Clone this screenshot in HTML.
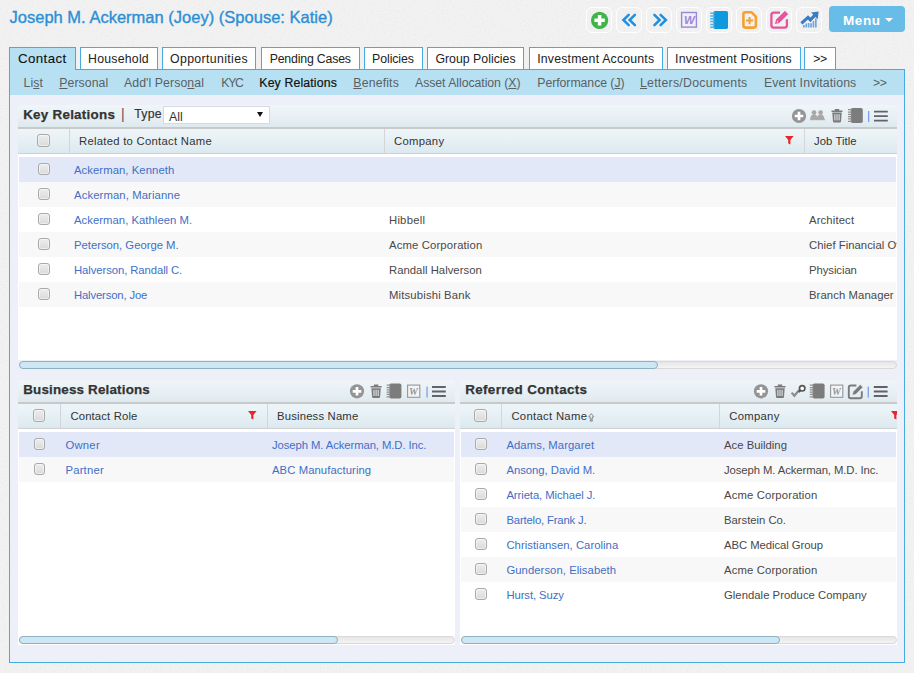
<!DOCTYPE html>
<html><head><meta charset="utf-8"><title>Joseph M. Ackerman</title>
<style>
html,body{margin:0;padding:0}
body{width:914px;height:673px;overflow:hidden;background:#f0f0f0;position:relative;font-family:"Liberation Sans",sans-serif}
.a{position:absolute}
.t{position:absolute;white-space:nowrap;font-family:"Liberation Sans",sans-serif}
u{text-decoration:underline}
</style></head><body>
<svg class="a" style="left:0;top:0" width="914" height="673"><filter id="nz" x="0" y="0" width="100%" height="100%"><feTurbulence type="fractalNoise" baseFrequency="0.7" numOctaves="2" seed="3"/><feColorMatrix type="matrix" values="0 0 0 0 0.5  0 0 0 0 0.5  0 0 0 0 0.5  0.5 0.5 0 0 -0.38"/></filter><rect width="914" height="673" fill="#f3f3f3"/><rect width="914" height="673" filter="url(#nz)" opacity=".35"/></svg>
<div class="t" style="left:9.50px;top:6.08px;font-size:16.5px;line-height:23px;letter-spacing:0.009px;color:#2b8fd6;-webkit-text-stroke:0.35px #2b8fd6;">Joseph M. Ackerman (Joey) (Spouse: Katie)</div>
<div class="a" style="left:586.2px;top:7px;width:25.6px;height:25.8px;border:1px solid rgba(255,255,255,.9);border-radius:6px;box-sizing:border-box;"></div>
<div class="a" style="left:616.2px;top:7px;width:25.6px;height:25.8px;border:1px solid rgba(255,255,255,.9);border-radius:6px;box-sizing:border-box;"></div>
<div class="a" style="left:646.2px;top:7px;width:25.6px;height:25.8px;border:1px solid rgba(255,255,255,.9);border-radius:6px;box-sizing:border-box;"></div>
<div class="a" style="left:676.2px;top:7px;width:25.6px;height:25.8px;border:1px solid rgba(255,255,255,.9);border-radius:6px;box-sizing:border-box;"></div>
<div class="a" style="left:706.2px;top:7px;width:25.6px;height:25.8px;border:1px solid rgba(255,255,255,.9);border-radius:6px;box-sizing:border-box;"></div>
<div class="a" style="left:736.2px;top:7px;width:25.6px;height:25.8px;border:1px solid rgba(255,255,255,.9);border-radius:6px;box-sizing:border-box;"></div>
<div class="a" style="left:766.2px;top:7px;width:25.6px;height:25.8px;border:1px solid rgba(255,255,255,.9);border-radius:6px;box-sizing:border-box;"></div>
<div class="a" style="left:796.2px;top:7px;width:25.6px;height:25.8px;border:1px solid rgba(255,255,255,.9);border-radius:6px;box-sizing:border-box;"></div>
<svg class="a" style="left:580px;top:0" width="250" height="40" viewBox="580 0 250 40">
<!-- plus -->
<circle cx="599.6" cy="20.3" r="8.6" fill="#40b449"/>
<path d="M599.6 15.1v10.4M594.4 20.3h10.4" stroke="#fff" stroke-width="3.5" stroke-linecap="butt"/>
<!-- << -->
<path d="M628.7 14.8l-5.3 5.2 5.3 5.2M634.9 14.8l-5.3 5.2 5.3 5.2" fill="none" stroke="#1e8fe1" stroke-width="2.5" stroke-linejoin="miter" stroke-linecap="round"/>
<!-- >> -->
<path d="M654.4 14.8l5.3 5.2-5.3 5.2M660.6 14.8l5.3 5.2-5.3 5.2" fill="none" stroke="#1e8fe1" stroke-width="2.5" stroke-linecap="round"/>
<!-- W -->
<rect x="681.6" y="12.5" width="14.8" height="14.6" fill="#f1eff9" stroke="#9888d8" stroke-width="1.4"/>
<text x="689.3" y="23.9" font-family="Liberation Sans, sans-serif" font-size="11.4" font-style="italic" font-weight="bold" fill="#9888d8" text-anchor="middle">W</text>
<!-- notebook -->
<rect x="713.4" y="10.9" width="14.6" height="18" rx="1.6" fill="#0e98de"/>
<path d="M710.2 13.2h4.6M710.2 16h4.6M710.2 18.8h4.6M710.2 21.6h4.6M710.2 24.4h4.6M710.2 27.2h4.6" stroke="#49b1e8" stroke-width="1.5"/>
<!-- doc plus -->
<path d="M745.4 12.2h6l4.5 4.5v8.9a2 2 0 0 1-2 2h-8.5a2 2 0 0 1-2-2v-11.4a2 2 0 0 1 2-2z" fill="none" stroke="#f5a030" stroke-width="2.6" stroke-linejoin="round"/>
<path d="M749.6 17v7.2M746 20.6h7.2" stroke="#f5a030" stroke-width="2"/>
<!-- edit -->
<path d="M780 12.6h-6.2a2.4 2.4 0 0 0-2.4 2.4v10.2a2.4 2.4 0 0 0 2.4 2.4h10.7a2.4 2.4 0 0 0 2.4-2.4v-6" fill="none" stroke="#e6529c" stroke-width="2.3"/>
<path d="M774.2 24.8l1.3-5.4 9.4-9.4 4.1 4.1-9.4 9.4z" fill="#e6529c" stroke="#f2f2f2" stroke-width="1.1" stroke-linejoin="round"/><path d="M776.6 22.4l.5-1.9 1.4 1.4z" fill="#fbe3ef"/>
<!-- chart -->
<path d="M803 27.6v-2.6h1.7v2.6zM805.4 27.6v-4.2h1.7v4.2zM807.8 27.6v-4.6h1.7v4.6zM810.2 27.6v-4.4h1.7v4.4zM812.6 27.6v-6.6h1.7v6.6zM815 27.6v-9.2h1.7v9.2z" fill="#6fa6dc"/>
<path d="M801.4 23.4l6.6-6 2.4 2.5 4.8-5" fill="none" stroke="#3a7dc6" stroke-width="3.2"/>
<path d="M811 12.6l7.6-1-.8 7.6z" fill="#3a7dc6"/>
</svg>
<div class="a" style="left:829px;top:6px;width:76px;height:26px;background:#67bce8;border-radius:4px;"></div>
<div class="t" style="left:843.00px;top:10.72px;font-size:13.5px;line-height:19px;letter-spacing:0.587px;color:#fff;font-weight:bold;">Menu</div>
<div class="a" style="left:885px;top:18px;width:0;height:0;border-left:4px solid transparent;border-right:4px solid transparent;border-top:4px solid #fff"></div>
<div class="a" style="left:9px;top:69px;width:896px;height:594px;box-sizing:border-box;border:1px solid #45abe1;background:#eef0f9;"></div>
<div class="a" style="left:10px;top:70px;width:894px;height:25px;background:#b7e1f3;"></div>
<div class="a" style="left:9px;top:47px;width:67px;height:23px;box-sizing:border-box;border:1px solid #45abe1;border-bottom:0;background:#b7e1f3;"></div>
<div class="t" style="left:18.00px;top:49.39px;font-size:13.3px;line-height:19px;letter-spacing:0.400px;color:#111;-webkit-text-stroke:0.12px #111;">Contact</div>
<div class="a" style="left:79.5px;top:47px;width:78px;height:23px;box-sizing:border-box;border:1px solid #45abe1;background:#fff;"></div>
<div class="t" style="left:88.04px;top:50.74px;font-size:12.3px;line-height:17px;letter-spacing:0.236px;color:#222;">Household</div>
<div class="a" style="left:162px;top:47px;width:94px;height:23px;box-sizing:border-box;border:1px solid #45abe1;background:#fff;"></div>
<div class="t" style="left:170.03px;top:50.74px;font-size:12.3px;line-height:17px;letter-spacing:0.368px;color:#222;">Opportunities</div>
<div class="a" style="left:261px;top:47px;width:98.5px;height:23px;box-sizing:border-box;border:1px solid #45abe1;background:#fff;"></div>
<div class="t" style="left:269.65px;top:50.74px;font-size:12.3px;line-height:17px;letter-spacing:-0.171px;color:#222;">Pending Cases</div>
<div class="a" style="left:363.5px;top:47px;width:59px;height:23px;box-sizing:border-box;border:1px solid #45abe1;background:#fff;"></div>
<div class="t" style="left:372.12px;top:50.74px;font-size:12.3px;line-height:17px;letter-spacing:-0.079px;color:#222;">Policies</div>
<div class="a" style="left:427px;top:47px;width:97px;height:23px;box-sizing:border-box;border:1px solid #45abe1;background:#fff;"></div>
<div class="t" style="left:435.38px;top:50.74px;font-size:12.3px;line-height:17px;letter-spacing:0.018px;color:#222;">Group Policies</div>
<div class="a" style="left:528.5px;top:47px;width:134.5px;height:23px;box-sizing:border-box;border:1px solid #45abe1;background:#fff;"></div>
<div class="t" style="left:537.26px;top:50.74px;font-size:12.3px;line-height:17px;letter-spacing:0.184px;color:#222;">Investment Accounts</div>
<div class="a" style="left:666.5px;top:47px;width:134px;height:23px;box-sizing:border-box;border:1px solid #45abe1;background:#fff;"></div>
<div class="t" style="left:675.06px;top:50.74px;font-size:12.3px;line-height:17px;letter-spacing:0.169px;color:#222;">Investment Positions</div>
<div class="a" style="left:804px;top:47px;width:32px;height:23px;box-sizing:border-box;border:1px solid #45abe1;background:#fff;"></div>
<div class="t" style="left:813.14px;top:50.74px;font-size:12.3px;line-height:17px;letter-spacing:-0.323px;color:#222;">&gt;&gt;</div>
<div class="t" style="left:23.60px;top:75.14px;font-size:12.3px;line-height:17px;letter-spacing:0.021px;color:#5a5f63;">Li<u>s</u>t</div>
<div class="t" style="left:59.30px;top:75.14px;font-size:12.3px;line-height:17px;letter-spacing:0.045px;color:#5a5f63;"><u>P</u>ersonal</div>
<div class="t" style="left:124.00px;top:75.14px;font-size:12.3px;line-height:17px;letter-spacing:0.078px;color:#5a5f63;">Add'l Perso<u>n</u>al</div>
<div class="t" style="left:221.30px;top:75.14px;font-size:12.3px;line-height:17px;letter-spacing:-1.292px;color:#5a5f63;">KYC</div>
<div class="t" style="left:259.30px;top:75.14px;font-size:12.3px;line-height:17px;letter-spacing:0.135px;color:#111;-webkit-text-stroke:0.2px #111;">Key Relations</div>
<div class="t" style="left:353.30px;top:75.14px;font-size:12.3px;line-height:17px;letter-spacing:0.153px;color:#5a5f63;"><u>B</u>enefits</div>
<div class="t" style="left:415.00px;top:75.14px;font-size:12.3px;line-height:17px;letter-spacing:-0.059px;color:#5a5f63;">Asset Allocation (<u>X</u>)</div>
<div class="t" style="left:537.30px;top:75.14px;font-size:12.3px;line-height:17px;letter-spacing:-0.063px;color:#5a5f63;">Performance (<u>J</u>)</div>
<div class="t" style="left:640.00px;top:75.14px;font-size:12.3px;line-height:17px;letter-spacing:0.251px;color:#5a5f63;"><u>L</u>etters/Documents</div>
<div class="t" style="left:764.00px;top:75.14px;font-size:12.3px;line-height:17px;letter-spacing:0.127px;color:#5a5f63;">Event Invitations</div>
<div class="t" style="left:873.00px;top:75.14px;font-size:12.3px;line-height:17px;letter-spacing:-0.323px;color:#5a5f63;">&gt;&gt;</div>
<div class="a" style="left:18px;top:104px;width:879px;height:270px;overflow:hidden">
<div class="a" style="left:-18px;top:-104px;width:914px;height:673px">
<div class="a" style="left:18px;top:105px;width:878.5px;height:23px;background:linear-gradient(#eff5f9,#e8f0f4 50%,#dde9ee);border-radius:3px 3px 0 0;"></div>
<div class="t" style="left:23.20px;top:105.26px;font-size:13.4px;line-height:19px;letter-spacing:0.259px;color:#333;font-weight:bold;-webkit-text-stroke:0.25px #333;">Key Relations</div>
<div class="a" style="left:18px;top:127px;width:878.5px;height:1.5px;background:#c8c9ca;"></div>
<div class="a" style="left:18px;top:128.5px;width:878.5px;height:24.5px;background:linear-gradient(#eef5f8,#e6f0f4 50%,#dbe9ef);"></div>
<div class="a" style="left:18px;top:153px;width:878.5px;height:1.1px;background:#cfd1d2;"></div>
<div class="a" style="left:18px;top:154.1px;width:878.5px;height:206.4px;background:#fff;"></div>
<div class="a" style="left:37.35px;top:134px;width:12.6px;height:12.6px;box-sizing:border-box;border:1px solid #a9a9a9;border-radius:3px;background:linear-gradient(#ededed,#dadada);box-shadow:inset 0 0 0 1px rgba(255,255,255,.5);"></div>
<div class="a" style="left:68.8px;top:128.5px;width:1px;height:24.5px;background:#d2d6d8;"></div>
<div class="t" style="left:79.00px;top:132.68px;font-size:11.3px;line-height:16px;letter-spacing:0.265px;color:#333;">Related to Contact Name</div>
<div class="a" style="left:384px;top:128.5px;width:1px;height:24.5px;background:#d2d6d8;"></div>
<div class="t" style="left:394.00px;top:132.68px;font-size:11.3px;line-height:16px;letter-spacing:0.281px;color:#333;">Company</div>
<div class="a" style="left:804px;top:128.5px;width:1px;height:24.5px;background:#d2d6d8;"></div>
<svg class="a" style="left:785px;top:136px" width="9" height="9" viewBox="0 0 9 9"><path d="M0 0h8.6l-3.2 4v4.6l-2.2-1.2v-3.4z" fill="#e8262c"/></svg>
<div class="t" style="left:814.00px;top:132.68px;font-size:11.3px;line-height:16px;letter-spacing:0.073px;color:#333;">Job Title</div>
<div class="a" style="left:19px;top:156.8px;width:876.5px;height:25px;background:#e3e8f9;"></div>
<div class="a" style="left:38.35px;top:163.2px;width:11.6px;height:11.6px;box-sizing:border-box;border:1px solid #a9a9a9;border-radius:3px;background:linear-gradient(#ededed,#dadada);box-shadow:inset 0 0 0 1px rgba(255,255,255,.5);"></div>
<div class="t" style="left:74.00px;top:162.28px;font-size:11.3px;line-height:16px;letter-spacing:0.062px;color:#3f6fc6;white-space:nowrap;">Ackerman, Kenneth</div>
<div class="a" style="left:19px;top:181.8px;width:876.5px;height:25px;background:#f8f8f8;"></div>
<div class="a" style="left:38.35px;top:188.2px;width:11.6px;height:11.6px;box-sizing:border-box;border:1px solid #a9a9a9;border-radius:3px;background:linear-gradient(#ededed,#dadada);box-shadow:inset 0 0 0 1px rgba(255,255,255,.5);"></div>
<div class="t" style="left:74.00px;top:187.28px;font-size:11.3px;line-height:16px;letter-spacing:0.107px;color:#3f6fc6;white-space:nowrap;">Ackerman, Marianne</div>
<div class="a" style="left:19px;top:206.8px;width:876.5px;height:25px;background:#fff;"></div>
<div class="a" style="left:38.35px;top:213.2px;width:11.6px;height:11.6px;box-sizing:border-box;border:1px solid #a9a9a9;border-radius:3px;background:linear-gradient(#ededed,#dadada);box-shadow:inset 0 0 0 1px rgba(255,255,255,.5);"></div>
<div class="t" style="left:74.00px;top:212.28px;font-size:11.3px;line-height:16px;letter-spacing:0.035px;color:#3f6fc6;white-space:nowrap;">Ackerman, Kathleen M.</div>
<div class="t" style="left:389.00px;top:212.28px;font-size:11.3px;line-height:16px;letter-spacing:0.225px;color:#484848;white-space:nowrap;">Hibbell</div>
<div class="t" style="left:809.00px;top:212.28px;font-size:11.3px;line-height:16px;letter-spacing:0.136px;color:#484848;white-space:nowrap;">Architect</div>
<div class="a" style="left:19px;top:231.8px;width:876.5px;height:25px;background:#f8f8f8;"></div>
<div class="a" style="left:38.35px;top:238.2px;width:11.6px;height:11.6px;box-sizing:border-box;border:1px solid #a9a9a9;border-radius:3px;background:linear-gradient(#ededed,#dadada);box-shadow:inset 0 0 0 1px rgba(255,255,255,.5);"></div>
<div class="t" style="left:74.00px;top:237.28px;font-size:11.3px;line-height:16px;letter-spacing:-0.012px;color:#3f6fc6;white-space:nowrap;">Peterson, George M.</div>
<div class="t" style="left:389.00px;top:237.28px;font-size:11.3px;line-height:16px;letter-spacing:0.144px;color:#484848;white-space:nowrap;">Acme Corporation</div>
<div class="t" style="left:809.00px;top:237.28px;font-size:11.3px;line-height:16px;letter-spacing:0.038px;color:#484848;white-space:nowrap;">Chief Financial Officer</div>
<div class="a" style="left:19px;top:256.8px;width:876.5px;height:25px;background:#fff;"></div>
<div class="a" style="left:38.35px;top:263.2px;width:11.6px;height:11.6px;box-sizing:border-box;border:1px solid #a9a9a9;border-radius:3px;background:linear-gradient(#ededed,#dadada);box-shadow:inset 0 0 0 1px rgba(255,255,255,.5);"></div>
<div class="t" style="left:74.00px;top:262.28px;font-size:11.3px;line-height:16px;letter-spacing:-0.081px;color:#3f6fc6;white-space:nowrap;">Halverson, Randall C.</div>
<div class="t" style="left:389.00px;top:262.28px;font-size:11.3px;line-height:16px;letter-spacing:0.027px;color:#484848;white-space:nowrap;">Randall Halverson</div>
<div class="t" style="left:809.00px;top:262.28px;font-size:11.3px;line-height:16px;letter-spacing:-0.058px;color:#484848;white-space:nowrap;">Physician</div>
<div class="a" style="left:19px;top:281.8px;width:876.5px;height:25px;background:#f8f8f8;"></div>
<div class="a" style="left:38.35px;top:288.2px;width:11.6px;height:11.6px;box-sizing:border-box;border:1px solid #a9a9a9;border-radius:3px;background:linear-gradient(#ededed,#dadada);box-shadow:inset 0 0 0 1px rgba(255,255,255,.5);"></div>
<div class="t" style="left:74.00px;top:287.28px;font-size:11.3px;line-height:16px;letter-spacing:-0.159px;color:#3f6fc6;white-space:nowrap;">Halverson, Joe</div>
<div class="t" style="left:389.00px;top:287.28px;font-size:11.3px;line-height:16px;letter-spacing:0.160px;color:#484848;white-space:nowrap;">Mitsubishi Bank</div>
<div class="t" style="left:809.00px;top:287.28px;font-size:11.3px;line-height:16px;letter-spacing:0.085px;color:#484848;white-space:nowrap;">Branch Manager</div>
<div class="a" style="left:19px;top:361px;width:877.5px;height:8px;box-sizing:border-box;border:1px solid #d9d9d9;border-radius:4px;background:linear-gradient(#e6e6e6,#f4f4f4);"></div>
<div class="a" style="left:19px;top:361px;width:638.5px;height:8px;box-sizing:border-box;border:1px solid #8fb0c0;border-radius:4px;background:#cde7f5;"></div>
<svg class="a" style="left:18px;top:105px" width="878.5" height="24" viewBox="18 105 878.5 24"><circle cx="799" cy="116" r="7.1" fill="#949494"/><path d="M799 111.7v8.6M794.7 116h8.6" stroke="#fff" stroke-width="2.7"/><circle cx="814" cy="112.6" r="2.4" fill="#a8a8a8"/><path d="M810.2 119.6c0-3.4 1.4-5 3.8-5s3.8 1.6 3.8 5z" fill="#a8a8a8"/><circle cx="820.6" cy="112.6" r="2.4" fill="#a8a8a8"/><path d="M816.8 119.6c0-3.4 1.4-5 3.8-5s3.8 1.6 3.8 5z" fill="#a8a8a8"/><rect x="810" y="119.1" width="15" height="1.1" fill="#a8a8a8"/><path d="M831.5 110.4h11v1.5h-11zM834.8 109h4.4v1.4h-4.4z" fill="#7a7a7a"/><path d="M832.3 112.6h9.4l-.7 8.9a1.1 1.1 0 0 1-1.1 1h-5.8a1.1 1.1 0 0 1-1.1-1z" fill="#7a7a7a"/><path d="M834.9 114.2v6.2M837 114.2v6.2M839.1 114.2v6.2" stroke="#e9eff3" stroke-width="1"/><rect x="850.8" y="108" width="12" height="15" rx="1.8" fill="#7c7c7c"/><path d="M848 109.7h4M848 112.02h4M848 114.34h4M848 116.66h4M848 118.98h4M848 121.3h4" stroke="#8e8e8e" stroke-width="1.25"/><rect x="868" y="111" width="1.3" height="11" fill="#7f9ee9"/><path d="M874 111.6h13.8M874 116.1h13.8M874 120.6h13.8" stroke="#62626a" stroke-width="1.8"/></svg>
</div></div>
<div class="t" style="left:121.00px;top:104.15px;font-size:14px;line-height:20px;letter-spacing:4.073px;color:#555;">|</div>
<div class="t" style="left:134.30px;top:105.84px;font-size:12.3px;line-height:17px;letter-spacing:0.178px;color:#333;-webkit-text-stroke:0.15px #333;">Type</div>
<div class="a" style="left:163px;top:106px;width:106.5px;height:17.5px;box-sizing:border-box;border:1px solid #d6dade;background:#fff;"></div>
<div class="t" style="left:169.00px;top:108.54px;font-size:12.3px;line-height:17px;letter-spacing:0.000px;color:#333;">All</div>
<div class="a" style="left:257px;top:112px;width:0;height:0;border-left:3.2px solid transparent;border-right:3.2px solid transparent;border-top:5.6px solid #111"></div>
<div class="a" style="left:18px;top:379px;width:437px;height:270px;overflow:hidden">
<div class="a" style="left:-18px;top:-379px;width:914px;height:673px">
<div class="a" style="left:18px;top:380px;width:437px;height:23px;background:linear-gradient(#eff5f9,#e8f0f4 50%,#dde9ee);border-radius:3px 3px 0 0;"></div>
<div class="t" style="left:23.20px;top:380.06px;font-size:13.4px;line-height:19px;letter-spacing:0.181px;color:#333;font-weight:bold;-webkit-text-stroke:0.25px #333;">Business Relations</div>
<div class="a" style="left:18px;top:402px;width:437px;height:1.5px;background:#c8c9ca;"></div>
<div class="a" style="left:18px;top:403.5px;width:437px;height:24.5px;background:linear-gradient(#eef5f8,#e6f0f4 50%,#dbe9ef);"></div>
<div class="a" style="left:18px;top:428px;width:437px;height:1.1px;background:#cfd1d2;"></div>
<div class="a" style="left:18px;top:429.1px;width:437px;height:215.9px;background:#fff;"></div>
<div class="a" style="left:32.85px;top:409px;width:12.6px;height:12.6px;box-sizing:border-box;border:1px solid #a9a9a9;border-radius:3px;background:linear-gradient(#ededed,#dadada);box-shadow:inset 0 0 0 1px rgba(255,255,255,.5);"></div>
<div class="a" style="left:59.8px;top:403.5px;width:1px;height:24.5px;background:#d2d6d8;"></div>
<div class="t" style="left:70.40px;top:407.68px;font-size:11.3px;line-height:16px;letter-spacing:0.154px;color:#333;">Contact Role</div>
<div class="a" style="left:267px;top:403.5px;width:1px;height:24.5px;background:#d2d6d8;"></div>
<svg class="a" style="left:248px;top:411px" width="9" height="9" viewBox="0 0 9 9"><path d="M0 0h8.6l-3.2 4v4.6l-2.2-1.2v-3.4z" fill="#e8262c"/></svg>
<div class="t" style="left:277.00px;top:407.68px;font-size:11.3px;line-height:16px;letter-spacing:0.176px;color:#333;">Business Name</div>
<div class="a" style="left:19px;top:431.8px;width:435px;height:25px;background:#e3e8f9;"></div>
<div class="a" style="left:33.85px;top:438.2px;width:11.6px;height:11.6px;box-sizing:border-box;border:1px solid #a9a9a9;border-radius:3px;background:linear-gradient(#ededed,#dadada);box-shadow:inset 0 0 0 1px rgba(255,255,255,.5);"></div>
<div class="t" style="left:65.40px;top:437.28px;font-size:11.3px;line-height:16px;letter-spacing:0.251px;color:#3f6fc6;white-space:nowrap;">Owner</div>
<div class="t" style="left:272.00px;top:437.28px;font-size:11.3px;line-height:16px;letter-spacing:-0.091px;color:#3f6fc6;white-space:nowrap;">Joseph M. Ackerman, M.D. Inc.</div>
<div class="a" style="left:19px;top:456.8px;width:435px;height:25px;background:#f8f8f8;"></div>
<div class="a" style="left:33.85px;top:463.2px;width:11.6px;height:11.6px;box-sizing:border-box;border:1px solid #a9a9a9;border-radius:3px;background:linear-gradient(#ededed,#dadada);box-shadow:inset 0 0 0 1px rgba(255,255,255,.5);"></div>
<div class="t" style="left:65.40px;top:462.28px;font-size:11.3px;line-height:16px;letter-spacing:0.211px;color:#3f6fc6;white-space:nowrap;">Partner</div>
<div class="t" style="left:272.00px;top:462.28px;font-size:11.3px;line-height:16px;letter-spacing:0.072px;color:#3f6fc6;white-space:nowrap;">ABC Manufacturing</div>
<div class="a" style="left:19px;top:636px;width:436px;height:8px;box-sizing:border-box;border:1px solid #d9d9d9;border-radius:4px;background:linear-gradient(#e6e6e6,#f4f4f4);"></div>
<div class="a" style="left:19px;top:636px;width:319px;height:8px;box-sizing:border-box;border:1px solid #8fb0c0;border-radius:4px;background:#cde7f5;"></div>
<svg class="a" style="left:18px;top:380px" width="437" height="24" viewBox="18 380 437 24"><circle cx="357" cy="391.3" r="7.1" fill="#949494"/><path d="M357 387v8.6M352.7 391.3h8.6" stroke="#fff" stroke-width="2.7"/><path d="M370.6 386h11v1.5h-11zM373.9 384.6h4.4v1.4h-4.4z" fill="#7a7a7a"/><path d="M371.4 388.2h9.4l-.7 8.9a1.1 1.1 0 0 1-1.1 1h-5.8a1.1 1.1 0 0 1-1.1-1z" fill="#7a7a7a"/><path d="M374 389.8v6.2M376.1 389.8v6.2M378.2 389.8v6.2" stroke="#e9eff3" stroke-width="1"/><rect x="389.4" y="383.5" width="12" height="15" rx="1.8" fill="#7c7c7c"/><path d="M386.6 385.2h4M386.6 387.52h4M386.6 389.84h4M386.6 392.16h4M386.6 394.48h4M386.6 396.8h4" stroke="#8e8e8e" stroke-width="1.25"/><rect x="407.6" y="385.1" width="12.2" height="12.2" fill="#f1f5f8" stroke="#969696" stroke-width="1.1"/><text x="413.5" y="394.8" font-family="Liberation Serif, serif" font-size="10" font-style="italic" font-weight="bold" fill="#969696" text-anchor="middle">W</text><rect x="426.4" y="386.6" width="1.3" height="11" fill="#7f9ee9"/><path d="M432 387h13.8M432 391.5h13.8M432 396h13.8" stroke="#62626a" stroke-width="1.8"/></svg>
</div></div>
<div class="a" style="left:460px;top:379px;width:437px;height:270px;overflow:hidden">
<div class="a" style="left:-460px;top:-379px;width:914px;height:673px">
<div class="a" style="left:460px;top:380px;width:436.5px;height:23px;background:linear-gradient(#eff5f9,#e8f0f4 50%,#dde9ee);border-radius:3px 3px 0 0;"></div>
<div class="t" style="left:465.20px;top:380.06px;font-size:13.4px;line-height:19px;letter-spacing:0.362px;color:#333;font-weight:bold;-webkit-text-stroke:0.25px #333;">Referred Contacts</div>
<div class="a" style="left:460px;top:402px;width:436.5px;height:1.5px;background:#c8c9ca;"></div>
<div class="a" style="left:460px;top:403.5px;width:436.5px;height:24.5px;background:linear-gradient(#eef5f8,#e6f0f4 50%,#dbe9ef);"></div>
<div class="a" style="left:460px;top:428px;width:436.5px;height:1.1px;background:#cfd1d2;"></div>
<div class="a" style="left:460px;top:429.1px;width:436.5px;height:215.9px;background:#fff;"></div>
<div class="a" style="left:474.35px;top:409px;width:12.6px;height:12.6px;box-sizing:border-box;border:1px solid #a9a9a9;border-radius:3px;background:linear-gradient(#ededed,#dadada);box-shadow:inset 0 0 0 1px rgba(255,255,255,.5);"></div>
<div class="a" style="left:500.8px;top:403.5px;width:1px;height:24.5px;background:#d2d6d8;"></div>
<div class="t" style="left:511.40px;top:407.68px;font-size:11.3px;line-height:16px;letter-spacing:0.303px;color:#333;">Contact Name</div>
<div class="a" style="left:719px;top:403.5px;width:1px;height:24.5px;background:#d2d6d8;"></div>
<svg class="a" style="left:588.4px;top:412.5px" width="7" height="9" viewBox="0 0 7 9"><path d="M3.3.6l2.6 3.2h-1.5v2.2h-2.2v-2.2h-1.5zM2.2 6.9h2.2v1.2h-2.2z" fill="none" stroke="#777" stroke-width=".8"/></svg>
<div class="t" style="left:729.30px;top:407.68px;font-size:11.3px;line-height:16px;letter-spacing:0.281px;color:#333;">Company</div>
<svg class="a" style="left:891px;top:411px" width="9" height="9" viewBox="0 0 9 9"><path d="M0 0h8.6l-3.2 4v4.6l-2.2-1.2v-3.4z" fill="#e8262c"/></svg>
<div class="a" style="left:461px;top:431.8px;width:434.5px;height:25px;background:#e3e8f9;"></div>
<div class="a" style="left:475.35px;top:438.2px;width:11.6px;height:11.6px;box-sizing:border-box;border:1px solid #a9a9a9;border-radius:3px;background:linear-gradient(#ededed,#dadada);box-shadow:inset 0 0 0 1px rgba(255,255,255,.5);"></div>
<div class="t" style="left:506.40px;top:437.28px;font-size:11.3px;line-height:16px;letter-spacing:0.073px;color:#3f6fc6;white-space:nowrap;">Adams, Margaret</div>
<div class="t" style="left:724.00px;top:437.28px;font-size:11.3px;line-height:16px;letter-spacing:0.013px;color:#484848;white-space:nowrap;">Ace Building</div>
<div class="a" style="left:461px;top:456.8px;width:434.5px;height:25px;background:#f8f8f8;"></div>
<div class="a" style="left:475.35px;top:463.2px;width:11.6px;height:11.6px;box-sizing:border-box;border:1px solid #a9a9a9;border-radius:3px;background:linear-gradient(#ededed,#dadada);box-shadow:inset 0 0 0 1px rgba(255,255,255,.5);"></div>
<div class="t" style="left:506.40px;top:462.28px;font-size:11.3px;line-height:16px;letter-spacing:-0.022px;color:#3f6fc6;white-space:nowrap;">Ansong, David M.</div>
<div class="t" style="left:724.00px;top:462.28px;font-size:11.3px;line-height:16px;letter-spacing:-0.091px;color:#484848;white-space:nowrap;">Joseph M. Ackerman, M.D. Inc.</div>
<div class="a" style="left:461px;top:481.8px;width:434.5px;height:25px;background:#fff;"></div>
<div class="a" style="left:475.35px;top:488.2px;width:11.6px;height:11.6px;box-sizing:border-box;border:1px solid #a9a9a9;border-radius:3px;background:linear-gradient(#ededed,#dadada);box-shadow:inset 0 0 0 1px rgba(255,255,255,.5);"></div>
<div class="t" style="left:506.40px;top:487.28px;font-size:11.3px;line-height:16px;letter-spacing:-0.078px;color:#3f6fc6;white-space:nowrap;">Arrieta, Michael J.</div>
<div class="t" style="left:724.00px;top:487.28px;font-size:11.3px;line-height:16px;letter-spacing:0.144px;color:#484848;white-space:nowrap;">Acme Corporation</div>
<div class="a" style="left:461px;top:506.8px;width:434.5px;height:25px;background:#f8f8f8;"></div>
<div class="a" style="left:475.35px;top:513.2px;width:11.6px;height:11.6px;box-sizing:border-box;border:1px solid #a9a9a9;border-radius:3px;background:linear-gradient(#ededed,#dadada);box-shadow:inset 0 0 0 1px rgba(255,255,255,.5);"></div>
<div class="t" style="left:506.40px;top:512.28px;font-size:11.3px;line-height:16px;letter-spacing:-0.165px;color:#3f6fc6;white-space:nowrap;">Bartelo, Frank J.</div>
<div class="t" style="left:724.00px;top:512.28px;font-size:11.3px;line-height:16px;letter-spacing:-0.019px;color:#484848;white-space:nowrap;">Barstein Co.</div>
<div class="a" style="left:461px;top:531.8px;width:434.5px;height:25px;background:#fff;"></div>
<div class="a" style="left:475.35px;top:538.2px;width:11.6px;height:11.6px;box-sizing:border-box;border:1px solid #a9a9a9;border-radius:3px;background:linear-gradient(#ededed,#dadada);box-shadow:inset 0 0 0 1px rgba(255,255,255,.5);"></div>
<div class="t" style="left:506.40px;top:537.28px;font-size:11.3px;line-height:16px;letter-spacing:0.033px;color:#3f6fc6;white-space:nowrap;">Christiansen, Carolina</div>
<div class="t" style="left:724.00px;top:537.28px;font-size:11.3px;line-height:16px;letter-spacing:-0.055px;color:#484848;white-space:nowrap;">ABC Medical Group</div>
<div class="a" style="left:461px;top:556.8px;width:434.5px;height:25px;background:#f8f8f8;"></div>
<div class="a" style="left:475.35px;top:563.2px;width:11.6px;height:11.6px;box-sizing:border-box;border:1px solid #a9a9a9;border-radius:3px;background:linear-gradient(#ededed,#dadada);box-shadow:inset 0 0 0 1px rgba(255,255,255,.5);"></div>
<div class="t" style="left:506.40px;top:562.28px;font-size:11.3px;line-height:16px;letter-spacing:0.052px;color:#3f6fc6;white-space:nowrap;">Gunderson, Elisabeth</div>
<div class="t" style="left:724.00px;top:562.28px;font-size:11.3px;line-height:16px;letter-spacing:0.144px;color:#484848;white-space:nowrap;">Acme Corporation</div>
<div class="a" style="left:461px;top:581.8px;width:434.5px;height:25px;background:#fff;"></div>
<div class="a" style="left:475.35px;top:588.2px;width:11.6px;height:11.6px;box-sizing:border-box;border:1px solid #a9a9a9;border-radius:3px;background:linear-gradient(#ededed,#dadada);box-shadow:inset 0 0 0 1px rgba(255,255,255,.5);"></div>
<div class="t" style="left:506.40px;top:587.28px;font-size:11.3px;line-height:16px;letter-spacing:-0.080px;color:#3f6fc6;white-space:nowrap;">Hurst, Suzy</div>
<div class="t" style="left:724.00px;top:587.28px;font-size:11.3px;line-height:16px;letter-spacing:0.029px;color:#484848;white-space:nowrap;">Glendale Produce Company</div>
<div class="a" style="left:461px;top:636px;width:435.5px;height:8px;box-sizing:border-box;border:1px solid #d9d9d9;border-radius:4px;background:linear-gradient(#e6e6e6,#f4f4f4);"></div>
<div class="a" style="left:461px;top:636px;width:318.5px;height:8px;box-sizing:border-box;border:1px solid #8fb0c0;border-radius:4px;background:#cde7f5;"></div>
<svg class="a" style="left:460px;top:380px" width="436.5" height="24" viewBox="460 380 436.5 24"><circle cx="761" cy="391.3" r="7.1" fill="#949494"/><path d="M761 387v8.6M756.7 391.3h8.6" stroke="#fff" stroke-width="2.7"/><path d="M774.5 386h11v1.5h-11zM777.8 384.6h4.4v1.4h-4.4z" fill="#7a7a7a"/><path d="M775.3 388.2h9.4l-.7 8.9a1.1 1.1 0 0 1-1.1 1h-5.8a1.1 1.1 0 0 1-1.1-1z" fill="#7a7a7a"/><path d="M777.9 389.8v6.2M780 389.8v6.2M782.1 389.8v6.2" stroke="#e9eff3" stroke-width="1"/><path d="M791.6 392.6l2.8 3.2 4.8-5.8" fill="none" stroke="#8c8c8c" stroke-width="2.2"/><circle cx="802.2" cy="388.3" r="2.7" fill="#fff" stroke="#555" stroke-width="1.7"/><path d="M800.4 390.4l-1.6 1.8" stroke="#555" stroke-width="2"/><rect x="812.6" y="383.5" width="12" height="15" rx="1.8" fill="#7c7c7c"/><path d="M809.8 385.2h4M809.8 387.52h4M809.8 389.84h4M809.8 392.16h4M809.8 394.48h4M809.8 396.8h4" stroke="#8e8e8e" stroke-width="1.25"/><rect x="830.6" y="385.1" width="12.2" height="12.2" fill="#f1f5f8" stroke="#969696" stroke-width="1.1"/><text x="836.5" y="394.8" font-family="Liberation Serif, serif" font-size="10" font-style="italic" font-weight="bold" fill="#969696" text-anchor="middle">W</text><path d="M856.4 385.5h-5.6a2 2 0 0 0-2 2v8.8a2 2 0 0 0 2 2h9a2 2 0 0 0 2-2v-5" fill="none" stroke="#7a7a7a" stroke-width="1.9"/><path d="M852.2 395.2l1-3.6 7-7 2.7 2.7-7 7z" fill="#7a7a7a" stroke="#e9eff3" stroke-width=".6"/><rect x="867.6" y="386.6" width="1.3" height="11" fill="#7f9ee9"/><path d="M873.8 387h13.8M873.8 391.5h13.8M873.8 396h13.8" stroke="#62626a" stroke-width="1.8"/></svg>
</div></div>
</body></html>
